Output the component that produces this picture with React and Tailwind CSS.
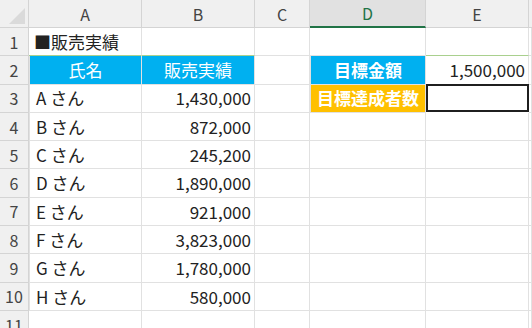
const font = { fontFamily: '"Noto Sans CJK JP", "Noto Sans", sans-serif' };

const rows = [
  ["A さん", "1,430,000"],
  ["B さん", "872,000"],
  ["C さん", "245,200"],
  ["D さん", "1,890,000"],
  ["E さん", "921,000"],
  ["F さん", "3,823,000"],
  ["G さん", "1,780,000"],
  ["H さん", "580,000"],
];

const cols = ["A", "B", "C", "D", "E"];

const Cell = ({ className = "", children }) => (
  <div className={`h-[28.3px] border-r border-b border-[#e1e1e1] flex items-center overflow-hidden whitespace-nowrap ${className}`}>
    {children}
  </div>
);

const RowHead = ({ n }) => (
  <div className="h-[28.3px] bg-[#f0f0f0] border-r border-b border-[#d4d4d4] flex items-center justify-center text-[16px] text-[#444]">
    {n}
  </div>
);

export default function App() {
  return (
    <div className="w-[532px] h-[328px] overflow-hidden bg-white text-[17px] text-[#222]" style={font}>
      <div className="grid grid-cols-[29px_113px_113px_55px_116px_103px_1fr]">
        {/* column headers */}
        <div className="h-[28px] bg-[#f0f0f0] border-r border-b border-[#d4d4d4] relative">
          <svg className="absolute right-[3px] bottom-[3px]" width="16" height="16" viewBox="0 0 16 16">
            <polygon points="16,0 16,16 0,16" fill="#dadada" />
          </svg>
        </div>
        {cols.map((c) =>
          c === "D" ? (
            <div key={c} className="h-[28px] bg-[#e1e1e1] border-r border-[#d4d4d4] border-b-2 border-b-[#217346] flex items-center justify-center text-[16px] text-[#217346]">
              {c}
            </div>
          ) : (
            <div key={c} className="h-[28px] bg-[#f0f0f0] border-r border-b border-[#d4d4d4] flex items-center justify-center text-[16px] text-[#444]">
              {c}
            </div>
          )
        )}
        <div className="h-[28px] bg-[#f0f0f0] border-b border-[#d4d4d4]" />

        {/* row 1 */}
        <RowHead n={1} />
        <Cell className="pl-[5px] border-b-[#a9d08e]">■販売実績</Cell>
        <Cell className="border-b-[#a9d08e]" />
        <Cell />
        <Cell />
        <Cell className="border-b-[#a9d08e]" />
        <Cell />

        {/* row 2 */}
        <RowHead n={2} />
        <Cell className="bg-[#00b0f0] text-white justify-center border-[#a9d08e] border-l">氏名</Cell>
        <Cell className="bg-[#00b0f0] text-white justify-center border-[#a9d08e]">販売実績</Cell>
        <Cell />
        <Cell className="bg-[#00b0f0] text-white font-bold justify-center border-[#a9d08e] border-l">目標金額</Cell>
        <Cell className="justify-end pr-[3px] border-[#a9d08e]">1,500,000</Cell>
        <Cell />

        {/* row 3 .. 10 */}
        {rows.map(([name, amt], i) => (
          <div key={name} className="contents">
            <RowHead n={i + 3} />
            <Cell className="pl-[6px] border-[#a9d08e] border-l">{name}</Cell>
            <Cell className="justify-end pr-[3px] border-[#a9d08e]">{amt}</Cell>
            <Cell />
            {i === 0 ? (
              <>
                <Cell className="bg-[#ffc000] text-white font-bold justify-center border-[#a9d08e] border-l">目標達成者数</Cell>
                <div className="h-[28.3px] border-2 border-[#1f1f1f] -mt-px" />
              </>
            ) : (
              <>
                <Cell />
                <Cell />
              </>
            )}
            <Cell />
          </div>
        ))}

        {/* row 11 */}
        <RowHead n={11} />
        <Cell />
        <Cell />
        <Cell />
        <Cell />
        <Cell />
        <Cell />
      </div>
    </div>
  );
}
